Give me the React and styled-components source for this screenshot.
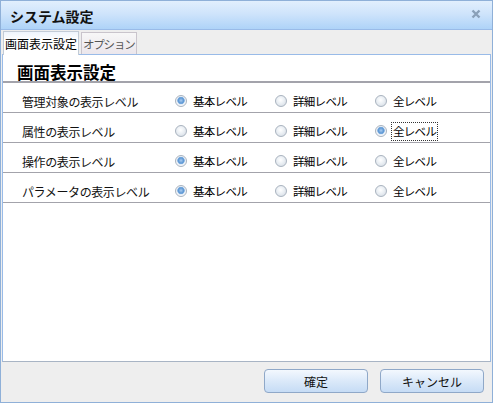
import styled, { createGlobalStyle } from "styled-components";

const GlobalStyle = createGlobalStyle`
    * { box-sizing: border-box; }
    body {
        margin: 0;
        background: #ffffff;
        font-family: "Noto Sans CJK JP", "DejaVu Sans", sans-serif;
        font-size: 12px;
        color: #000000;
    }
`

const rows = [
    { label: "管理対象の表示レベル", value: 0 },
    { label: "属性の表示レベル", value: 2, focus: true },
    { label: "操作の表示レベル", value: 0 },
    { label: "パラメータの表示レベル", value: 0 },
];

const levels = ["基本レベル", "詳細レベル", "全レベル"];

export default function App() {
    return (
        <>
            <GlobalStyle />
            <Dialog>
                <TitleBar>
                    <h1>システム設定</h1>
                    <CloseIcon viewBox="0 0 10 10">
                        <path d="M1.5 1.5 L8.5 8.5 M8.5 1.5 L1.5 8.5" stroke="#8aa0b8" strokeWidth="2.4" />
                    </CloseIcon>
                </TitleBar>
                <Body>
                    <TabStrip>
                        <Tab $active>画面表示設定</Tab>
                        <Tab>オプション</Tab>
                    </TabStrip>
                    <Panel>
                        <Heading>画面表示設定</Heading>
                        {rows.map((row) => (
                            <Row key={row.label}>
                                <Label>{row.label}</Label>
                                {levels.map((level, i) => (
                                    <Option key={level}>
                                        <Radio $checked={row.value === i} />
                                        <OptionText $focus={row.focus && row.value === i}>{level}</OptionText>
                                    </Option>
                                ))}
                            </Row>
                        ))}
                    </Panel>
                    <Footer>
                        <Button>確定</Button>
                        <Button>キャンセル</Button>
                    </Footer>
                </Body>
            </Dialog>
        </>
    );
}

const Dialog = styled.div`
    width: 493px;
    height: 403px;
    border: 1px solid #8fb0d8;
    display: flex;
    flex-direction: column;
    background: #eeeeee;
`
const TitleBar = styled.div`
    height: 29px;
    flex-shrink: 0;
    display: flex;
    align-items: center;
    justify-content: space-between;
    padding: 0 11px 0 9px;
    background: linear-gradient(#e2effd, #cfe4fb 45%, #aed3f8);
    border-bottom: 1px solid #99bbe8;

    h1 {
        margin: 0;
        font-size: 14px;
        font-weight: 700;
        line-height: 16px;
        padding-top: 2px;
        color: #111111;
    }
`
const CloseIcon = styled.svg`
    width: 10px;
    height: 10px;
    margin-top: -3px;
`
const Body = styled.div`
    flex: 1;
    display: flex;
    flex-direction: column;
    padding: 0 1px;
    min-height: 0;
`
const TabStrip = styled.div`
    height: 25px;
    flex-shrink: 0;
    display: flex;
    align-items: flex-end;
    gap: 2px;
    padding-left: 1px;
    border-bottom: 1px solid #99bbe8;
`
const Tab = styled.div`
    height: ${(p) => (p.$active ? "24px" : "22px")};
    padding: 0 1px;
    display: flex;
    align-items: center;
    font-size: ${(p) => (p.$active ? "12px" : "11.5px")};
    letter-spacing: ${(p) => (p.$active ? "0" : "-1.2px")};
    color: ${(p) => (p.$active ? "#000000" : "#555555")};
    background: ${(p) =>
        p.$active
            ? "linear-gradient(#eef4fc, #ffffff 35%)"
            : "linear-gradient(#f7f7f7, #ebe6ec)"};
    border: 1px solid ${(p) => (p.$active ? "#c2cbd6" : "#c9c4cc")};
    border-bottom: none;
    margin-bottom: ${(p) => (p.$active ? "-1px" : "0")};
    position: relative;
`
const Panel = styled.div`
    flex: 1;
    background: #ffffff;
    border: 1px solid #99bbe8;
    border-top: none;
    border-bottom-color: #a8b4c4;
`
const Heading = styled.h2`
    margin: 0;
    height: 28px;
    padding: 9px 0 0 14px;
    font-size: 16.5px;
    font-weight: 700;
    line-height: 17px;
    border-bottom: 2px solid #a3a3ab;
`
const Row = styled.div`
    height: 30px;
    display: flex;
    align-items: center;
    padding: 7px 0 0 19px;
    border-bottom: 1px solid #a3a3ab;
`
const Label = styled.div`
    width: 153px;
    font-size: 12px;
    letter-spacing: -0.4px;
    color: #111111;
`
const Option = styled.label`
    width: 100px;
    display: flex;
    align-items: center;
    gap: 5px;
    font-size: 11.5px;
    letter-spacing: -0.7px;
`
const Radio = styled.span`
    width: 12px;
    height: 12px;
    border-radius: 50%;
    border: 1px solid #a9b3bf;
    background: ${(p) =>
        p.$checked
            ? "radial-gradient(circle at 50% 45%, #a9cbef 0, #5f98d4 2.6px, #7eaee0 3.4px, #e4ecf5 4px, #f6f8fb 5px)"
            : "radial-gradient(circle at 45% 40%, #ffffff 0, #eef2f6 3px, #dde3ea 6px)"};
    flex-shrink: 0;
`
const OptionText = styled.span`
    padding: 0 1px;
    outline: ${(p) => (p.$focus ? "1px dotted #333333" : "none")};
    line-height: 17px;
`
const Footer = styled.div`
    height: 40px;
    flex-shrink: 0;
    display: flex;
    justify-content: flex-end;
    align-items: flex-start;
    gap: 12px;
    padding: 7px 7px 0 0;
`
const Button = styled.button`
    width: 104px;
    height: 24px;
    font-family: "Noto Sans CJK JP", "DejaVu Sans", sans-serif;
    font-size: 12px;
    color: #111111;
    border: 1px solid #8fa8c8;
    border-radius: 4px;
    background: linear-gradient(#f3f8fe, #dbe9f9 50%, #c6dcf5);
    padding: 0;
`
